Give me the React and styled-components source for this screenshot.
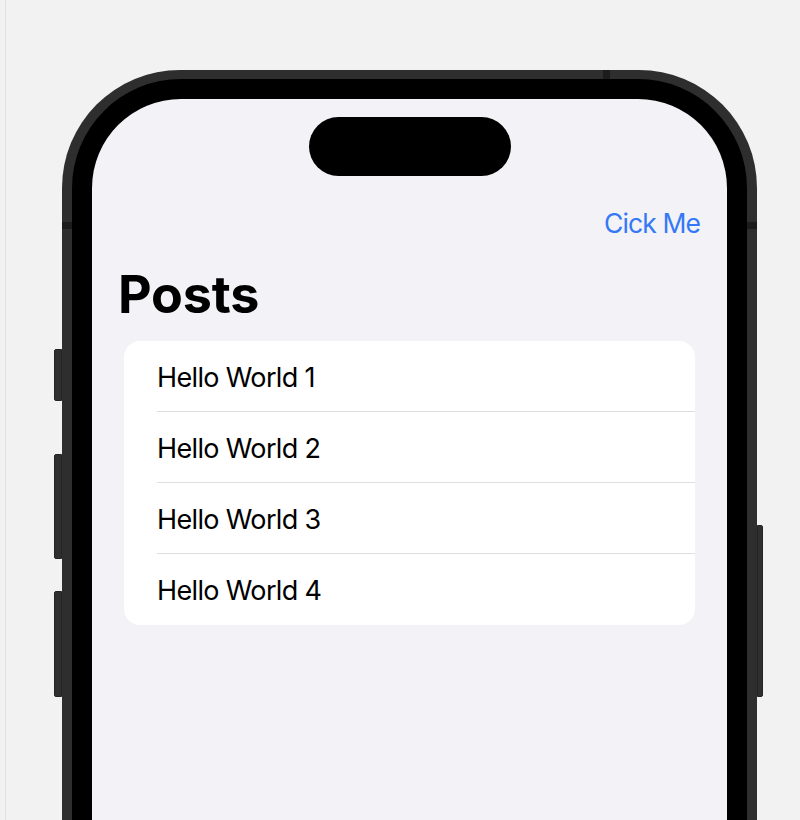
import React from "react";
import styled, { createGlobalStyle } from "styled-components";

const GlobalStyle = createGlobalStyle`
  html, body {
    margin: 0;
    padding: 0;
    background: #f2f2f2;
    overflow: hidden;
  }
  * { box-sizing: border-box; }
`;

const Page = styled.div`
  height: 820px;
  margin-left: 5px;
  border-left: 1px solid #e2e2e2;
  padding: 70px 0 0 56px;
  overflow: hidden;
  font-family: Inter, "Noto Sans", sans-serif;
`;

const Phone = styled.div`
  position: relative;
  width: 695px;
  height: 1420px;
  border-radius: 118px;
  background: #2e2e2e;
  padding: 9px 10px;
`;

const Bezel = styled.div`
  height: 100%;
  border-radius: 109px;
  background: #000;
  padding: 20px;
`;

const Screen = styled.div`
  height: 100%;
  border-radius: 89px;
  background: #f2f2f7;
  padding-top: 18px;
  overflow: hidden;
  display: flex;
  flex-direction: column;
`;

const Island = styled.div`
  align-self: center;
  width: 202px;
  height: 59px;
  border-radius: 30px;
  background: #000;
`;

const SideButton = styled.div`
  position: absolute;
  top: ${(p) => p.top}px;
  height: ${(p) => p.h}px;
  width: ${(p) => (p.right ? 6 : 8)}px;
  ${(p) => (p.right ? "right: -6px;" : "left: -8px;")}
  background: #2f2f2f;
  border: 1px solid #242424;
  border-radius: ${(p) => (p.right ? "0 2px 2px 0" : "2px 0 0 2px")};
`;

const Antenna = styled.div`
  position: absolute;
  background: #1c1c1c;
  ${(p) => p.pos}
`;

const NavBar = styled.div`
  display: flex;
  justify-content: flex-end;
  margin-top: 33px;
  padding-right: 27px;
  height: 28px;
`;

const NavButton = styled.button`
  border: none;
  background: none;
  padding: 0;
  font-family: Inter, "Noto Sans", sans-serif;
  font-size: 26.5px;
  line-height: 28px;
  color: #3478f6;
  letter-spacing: -0.9px;
  cursor: pointer;
`;

const Title = styled.h1`
  margin: 31px 0 0 26px;
  font-size: 52px;
  line-height: 54px;
  font-weight: 700;
  letter-spacing: -0.2px;
  color: #000;
`;

const List = styled.div`
  margin: 19px 32px 0;
  background: #fff;
  border-radius: 16px;
  overflow: hidden;
`;

const Row = styled.div`
  height: 71px;
  margin-left: 33px;
  padding-top: 2px;
  display: flex;
  align-items: center;
  font-size: 27px;
  letter-spacing: -0.65px;
  color: #000;
  border-bottom: ${(p) => (p.last ? "none" : "1px solid #dedede")};
`;

const posts = ["Hello World 1", "Hello World 2", "Hello World 3", "Hello World 4"];

export default function App() {
  return (
    <>
      <GlobalStyle />
      <Page>
        <Phone>
          <SideButton top={279} h={52} />
          <SideButton top={384} h={105} />
          <SideButton top={521} h={106} />
          <SideButton right top={455} h={172} />
          <Antenna pos="left: 0; top: 152px; width: 10px; height: 7px;" />
          <Antenna pos="right: 0; top: 152px; width: 10px; height: 7px;" />
          <Antenna pos="left: 541px; top: 0; width: 7px; height: 9px;" />
          <Bezel>
            <Screen>
              <Island />
              <NavBar>
                <NavButton>Cick Me</NavButton>
              </NavBar>
              <Title>Posts</Title>
              <List>
                {posts.map((p, i) => (
                  <Row key={p} last={i === posts.length - 1}>
                    {p}
                  </Row>
                ))}
              </List>
            </Screen>
          </Bezel>
        </Phone>
      </Page>
    </>
  );
}
